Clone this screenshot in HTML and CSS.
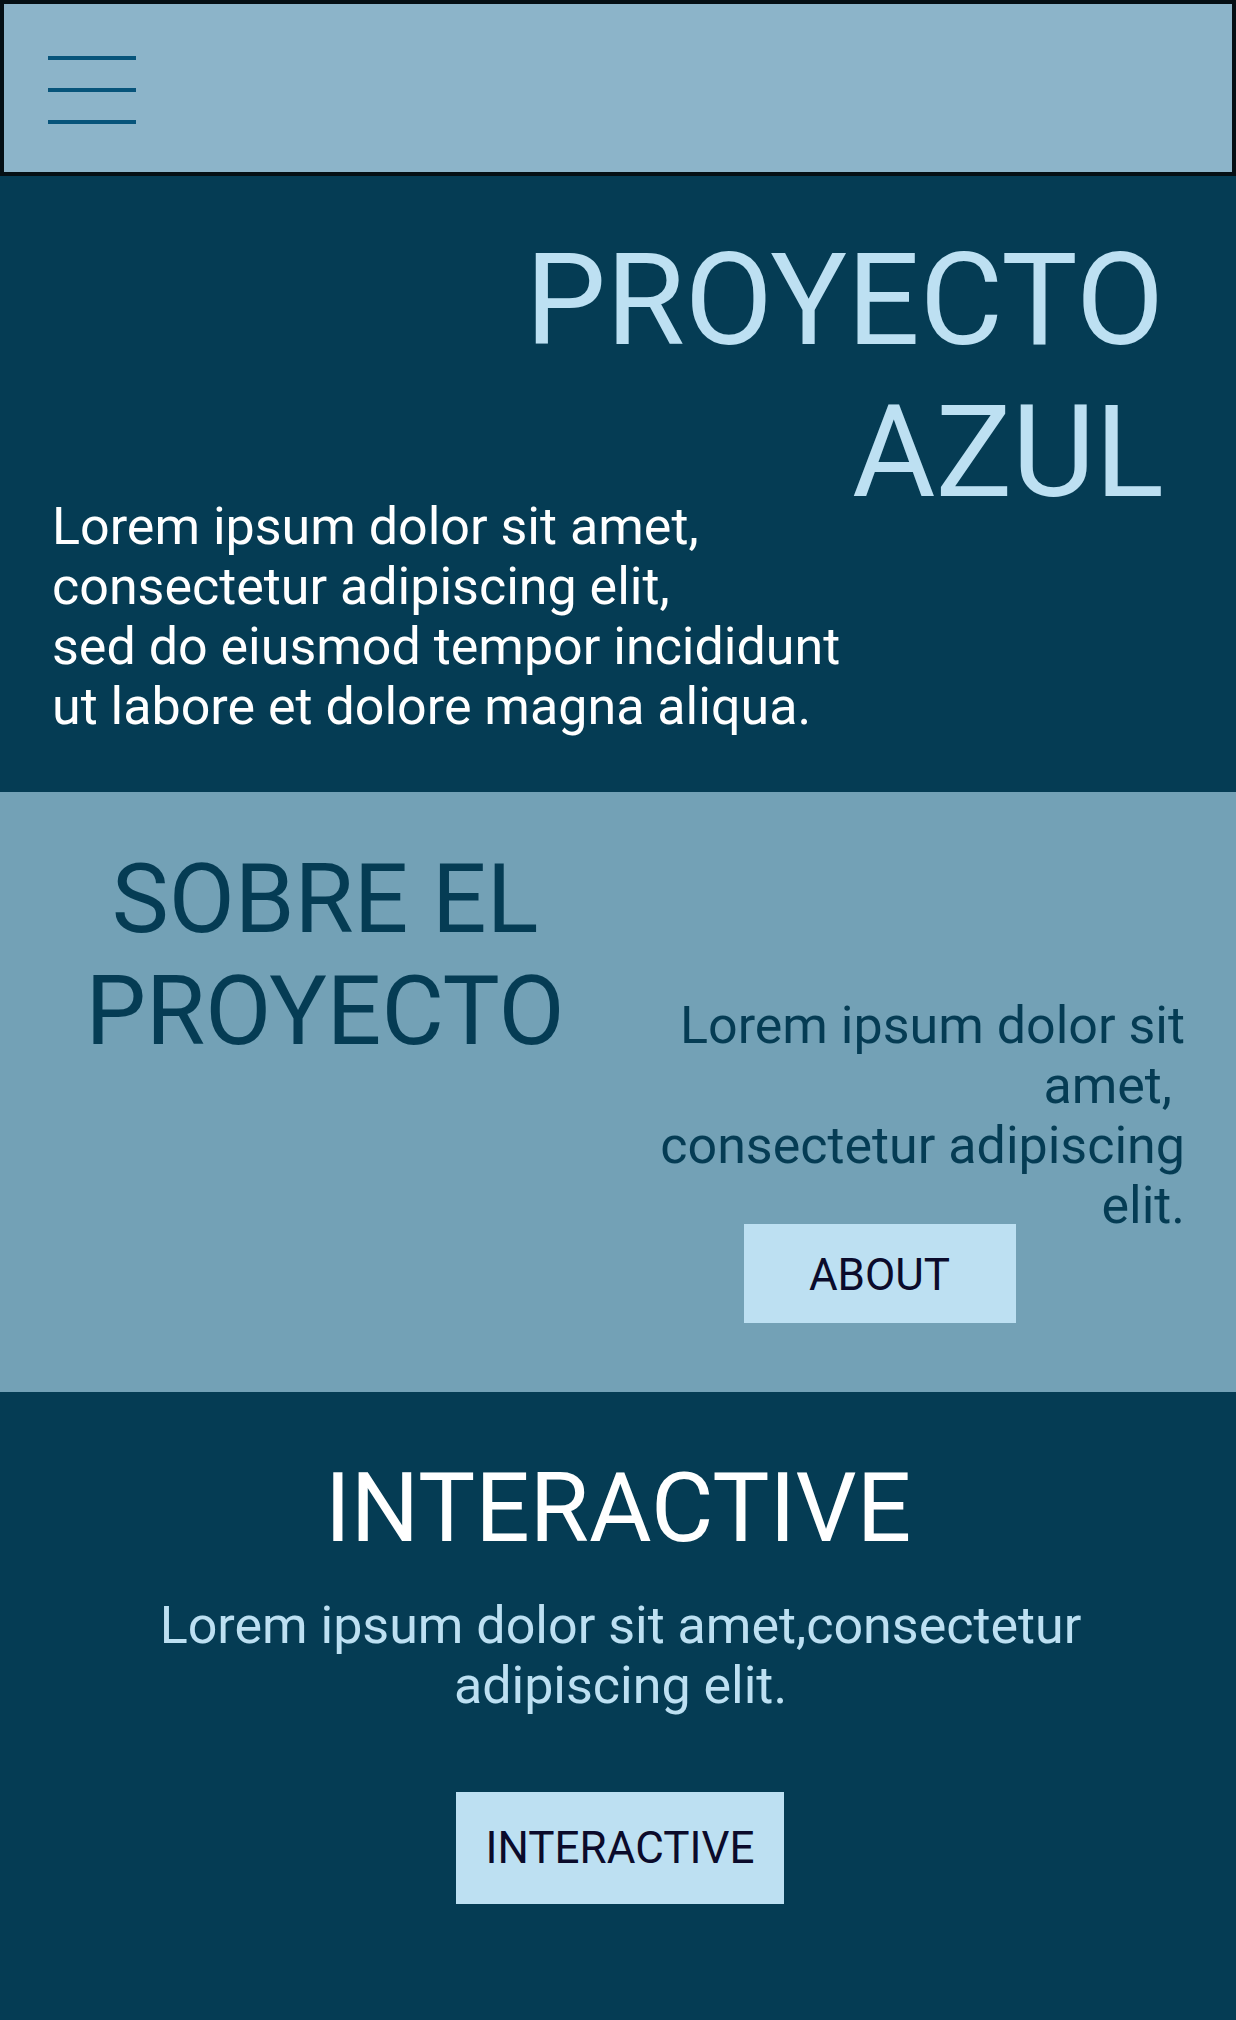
FILE: index.html
```html
<!DOCTYPE html>
<html lang="es">
<head>
<meta charset="utf-8">
<title>Proyecto Azul</title>
<link rel="stylesheet" href="styles.css">
</head>
<body>
<header class="topbar">
  <button class="burger" aria-label="Menu">
    <span class="burger-line"></span>
    <span class="burger-line"></span>
    <span class="burger-line"></span>
  </button>
</header>

<section class="hero">
  <h1 class="hero-title">PROYECTO<br>AZUL</h1>
  <p class="hero-text">Lorem ipsum dolor sit amet,<br>consectetur adipiscing elit,<br>sed do eiusmod tempor incididunt<br>ut labore et dolore magna aliqua.</p>
</section>

<section class="about">
  <div class="about-left">
    <h2 class="about-title">SOBRE EL<br>PROYECTO</h2>
  </div>
  <div class="about-right">
    <p class="about-text">Lorem ipsum dolor sit amet,&nbsp;<br>consectetur adipiscing elit.</p>
    <div class="about-actions">
      <a class="btn btn-about" href="#">ABOUT</a>
    </div>
  </div>
</section>

<section class="interactive">
  <h2 class="interactive-title">INTERACTIVE</h2>
  <p class="interactive-text">Lorem ipsum dolor sit amet,consectetur adipiscing elit.</p>
  <a class="btn btn-interactive" href="#">INTERACTIVE</a>
</section>
</body>
</html>
```

FILE: styles.css
```css
* { box-sizing: border-box; }

html, body {
  margin: 0;
  padding: 0;
}

body {
  font-family: Roboto, "Liberation Sans", Arial, sans-serif;
  background: #053c54;
  width: 1236px;
}

/* Header */
.topbar {
  height: 176px;
  border: 4px solid #050f14;
  background: #8cb4c9;
  display: flex;
  align-items: flex-start;
  padding: 52px 0 0 44px;
}

.burger {
  display: flex;
  flex-direction: column;
  gap: 28px;
  padding: 0;
  margin: 0;
  border: 0;
  background: transparent;
  cursor: pointer;
}

.burger-line {
  display: block;
  width: 88px;
  height: 4px;
  background: #07547a;
}

/* Hero */
.hero {
  background: #053c54;
  padding: 48px 72px 55px 52px;
}

.hero-title {
  margin: 0;
  font-size: 128px;
  font-weight: 400;
  line-height: 152px;
  text-align: right;
  color: #bde0f2;
}

.hero-text {
  margin: -31px 0 0;
  font-size: 52px;
  line-height: 60px;
  color: #ffffff;
}

/* About */
.about {
  background: #73a1b6;
  display: grid;
  grid-template-columns: 610px 1fr;
  padding: 51px 51px 69px 0;
}

.about-left {
  padding-left: 40px;
  text-align: center;
}

.about-title {
  margin: 0;
  font-size: 96px;
  font-weight: 400;
  line-height: 112px;
  color: #053c54;
}

.about-right {
  padding-top: 153px;
}

.about-text {
  margin: 0;
  font-size: 52px;
  line-height: 60px;
  text-align: right;
  color: #053c54;
}

.about-actions {
  display: flex;
  justify-content: center;
  padding-right: 36px;
  margin-top: -12px;
}

/* Buttons */
.btn {
  display: inline-block;
  background: #bde0f2;
  color: #0b0b2b;
  text-decoration: none;
  font-size: 44px;
  line-height: 52px;
  text-align: center;
}

.btn-about {
  width: 272px;
  padding: 25px 0 22px;
}

.btn-interactive {
  width: 328px;
  padding: 30px 0;
  margin-left: 4px;
}

/* Interactive */
.interactive {
  background: #053c54;
  text-align: center;
  padding: 60px 100px 116px;
}

.interactive-title {
  margin: 0;
  font-size: 96px;
  font-weight: 400;
  line-height: 112px;
  color: #ffffff;
}

.interactive-text {
  margin: 32px 0 76px;
  padding-left: 5px;
  font-size: 52px;
  line-height: 60px;
  color: #bde0f2;
}
```
